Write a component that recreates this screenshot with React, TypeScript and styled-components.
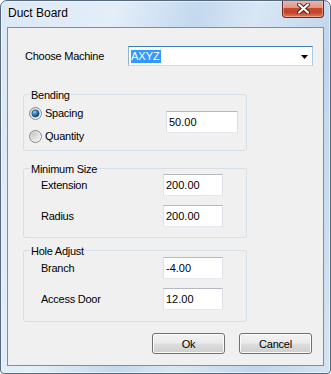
import React from 'react';
import styled, { createGlobalStyle } from 'styled-components';

const Global = createGlobalStyle`
  html, body { margin: 0; padding: 0; background: #ffffff; }
  body { width: 331px; height: 374px; overflow: hidden; }
`;

const Window = styled.div`
  box-sizing: border-box;
  width: 331px;
  height: 374px;
  border: 1px solid #56687b;
  border-radius: 7px 7px 4px 4px;
  background: linear-gradient(103deg, #dbe8f5 0%, #e3eef9 28%, #c3d9ee 48%, #d9e7f5 62%, #c0d6ed 82%, #d4e5f5 100%);
  box-shadow: inset 0 0 0 1px rgba(255, 255, 255, 0.55);
  display: flex;
  flex-direction: column;
  overflow: hidden;
  font-family: "Liberation Sans", Arial, sans-serif;
  font-size: 11px;
  color: #000;
`;

const TitleBar = styled.div`
  height: 26px;
  display: flex;
  align-items: flex-start;
  flex-shrink: 0;
`;

const Title = styled.div`
  padding: 5px 0 0 7px;
  font-size: 12px;
  line-height: 15px;
  color: #000;
  text-shadow: 0 0 6px rgba(255, 255, 255, 0.95);
`;

const CloseButton = styled.div`
  box-sizing: border-box;
  width: 42px;
  height: 18px;
  margin: -1px 6px 0 auto;
  border: 1px solid #6a2b22;
  border-top: none;
  border-radius: 0 0 4px 4px;
  background: linear-gradient(#ecb8ab 0%, #de9a8a 44%, #c8482f 50%, #c44128 72%, #df7c58 100%);
  box-shadow: inset 0 0 0 1px rgba(255, 210, 200, 0.45);
  display: flex;
  align-items: center;
  justify-content: center;
`;

const Client = styled.div`
  flex: 1;
  margin: 0 6px 7px 6px;
  border: 1px solid #808e9c;
  background: #f0f0f0;
  padding: 18px 11px 0 15px;
  display: flex;
  flex-direction: column;
  align-items: flex-start;
`;

const MachineRow = styled.div`
  display: grid;
  grid-template-columns: 103px 185px;
  align-items: center;
  padding-left: 2px;
  height: 20px;
`;

const Label = styled.span`
  line-height: 13px;
  white-space: nowrap;
  letter-spacing: -0.25px;
`;

const Combo = styled.div`
  box-sizing: border-box;
  height: 20px;
  display: flex;
  align-items: center;
  padding: 0 4px 0 2px;
  background: #ffffff;
  border: 1px solid;
  border-color: #3c7fb1 #a9cbe6 #c5dbee #8db5d8;
`;

const Selected = styled.span`
  background: #3399ff;
  color: #ffffff;
  line-height: 13px;
  padding: 0 1px 0 0;
`;

const Arrow = styled.svg`
  margin-left: auto;
  margin-top: 2px;
`;

const Group = styled.div<{ $h: number; $mt: number }>`
  position: relative;
  box-sizing: border-box;
  width: 224px;
  height: ${(p) => p.$h}px;
  margin-top: ${(p) => p.$mt}px;
  border: 1px solid #d5dfe5;
  border-radius: 3px;
`;

const Legend = styled.span`
  position: absolute;
  top: -6px;
  left: 6px;
  padding: 0 1px;
  background: #f0f0f0;
  line-height: 13px;
  white-space: nowrap;
  letter-spacing: -0.25px;
`;

const BendingGrid = styled.div`
  display: grid;
  grid-template-columns: 137px 72px;
  grid-template-rows: 23px 23px;
  padding: 7px 0 0 5px;
`;

const RadioRow = styled.label`
  display: flex;
  align-items: center;
  gap: 3px;
  grid-column: 1;
`;

const FieldRows = styled.div<{ $pt: number }>`
  display: grid;
  grid-template-columns: 122px 60px;
  grid-auto-rows: 22px;
  row-gap: 9px;
  align-items: center;
  padding: ${(p) => p.$pt}px 0 0 17px;
`;

const TextBox = styled.input<{ $w: number }>`
  box-sizing: border-box;
  width: ${(p) => p.$w}px;
  height: 22px;
  margin: 0;
  padding: 0 1px 1px 2px;
  border: 1px solid;
  border-color: #b6b9c0 #dde1e7 #e3e9ef #dde1e7;
  border-radius: 0;
  background: #ffffff;
  font-family: "Liberation Sans", Arial, sans-serif;
  font-size: 11px;
  color: #000;
  outline: none;
`;

const BendingBox = styled(TextBox)`
  grid-column: 2;
  grid-row: 1 / span 2;
  align-self: start;
  margin-top: 9px;
`;

const ButtonRow = styled.div`
  align-self: stretch;
  display: flex;
  justify-content: flex-end;
  gap: 14px;
  margin-top: 11px;
`;

const Button = styled.button`
  box-sizing: border-box;
  width: 73px;
  height: 21px;
  padding: 0;
  border: 1px solid #707070;
  border-radius: 3px;
  background: linear-gradient(#f2f2f2 0%, #ebebeb 48%, #dddddd 52%, #cfcfcf 100%);
  box-shadow: inset 0 0 0 1px #fbfbfb;
  font-family: "Liberation Sans", Arial, sans-serif;
  font-size: 11px;
  letter-spacing: -0.2px;
  color: #000;
`;

const Radio: React.FC<{ checked?: boolean; id: string }> = ({ checked, id }) => (
  <svg width="13" height="13" viewBox="0 0 13 13">
    <defs>
      <linearGradient id={`ring-${id}`} x1="0" y1="0" x2="1" y2="1">
        <stop offset="0" stopColor="#d0d0d0" />
        <stop offset="1" stopColor="#fdfdfd" />
      </linearGradient>
      <linearGradient id={`in-${id}`} x1="0" y1="0" x2="1" y2="1">
        <stop offset="0" stopColor="#c4c4c4" />
        <stop offset="1" stopColor="#f4f4f4" />
      </linearGradient>
      <radialGradient id={`dot-${id}`} cx="0.35" cy="0.3" r="0.75">
        <stop offset="0" stopColor="#9ad8fb" />
        <stop offset="0.45" stopColor="#2a86cc" />
        <stop offset="1" stopColor="#0b3a66" />
      </radialGradient>
    </defs>
    <circle cx="6.5" cy="6.5" r="6" fill={`url(#ring-${id})`} stroke="#8a8a8a" strokeWidth="1" />
    <circle cx="6.5" cy="6.5" r="4" fill={`url(#in-${id})`} />
    {checked && <circle cx="6.5" cy="6.5" r="3.6" fill={`url(#dot-${id})`} stroke="#1c4f7c" strokeWidth="0.7" />}
  </svg>
);

export default function App() {
  return (
    <>
      <Global />
      <Window>
        <TitleBar>
          <Title>Duct Board</Title>
          <CloseButton>
            <svg width="13" height="11" viewBox="0 0 13 11">
              <path d="M2 1.5 L11 9.5 M11 1.5 L2 9.5" stroke="#4b1c16" strokeWidth="4" strokeLinecap="round" />
              <path d="M2 1.5 L11 9.5 M11 1.5 L2 9.5" stroke="#ffffff" strokeWidth="2.2" strokeLinecap="round" />
            </svg>
          </CloseButton>
        </TitleBar>
        <Client>
          <MachineRow>
            <Label>Choose Machine</Label>
            <Combo>
              <Selected>AXYZ</Selected>
              <Arrow width="7" height="4" viewBox="0 0 7 4">
                <path d="M0 0 H7 L3.5 4 Z" fill="#000" />
              </Arrow>
            </Combo>
          </MachineRow>

          <Group $h={57} $mt={28}>
            <Legend>Bending</Legend>
            <BendingGrid>
              <RadioRow>
                <Radio checked id="sp" />
                <Label>Spacing</Label>
              </RadioRow>
              <BendingBox $w={72} defaultValue="50.00" readOnly />
              <RadioRow>
                <Radio id="qt" />
                <Label>Quantity</Label>
              </RadioRow>
            </BendingGrid>
          </Group>

          <Group $h={70} $mt={17}>
            <Legend>Minimum Size</Legend>
            <FieldRows $pt={5}>
              <Label>Extension</Label>
              <TextBox $w={60} defaultValue="200.00" readOnly />
              <Label>Radius</Label>
              <TextBox $w={60} defaultValue="200.00" readOnly />
            </FieldRows>
          </Group>

          <Group $h={72} $mt={12}>
            <Legend>Hole Adjust</Legend>
            <FieldRows $pt={6}>
              <Label>Branch</Label>
              <TextBox $w={60} defaultValue="-4.00" readOnly />
              <Label>Access Door</Label>
              <TextBox $w={60} defaultValue="12.00" readOnly />
            </FieldRows>
          </Group>

          <ButtonRow>
            <Button>Ok</Button>
            <Button>Cancel</Button>
          </ButtonRow>
        </Client>
      </Window>
    </>
  );
}
